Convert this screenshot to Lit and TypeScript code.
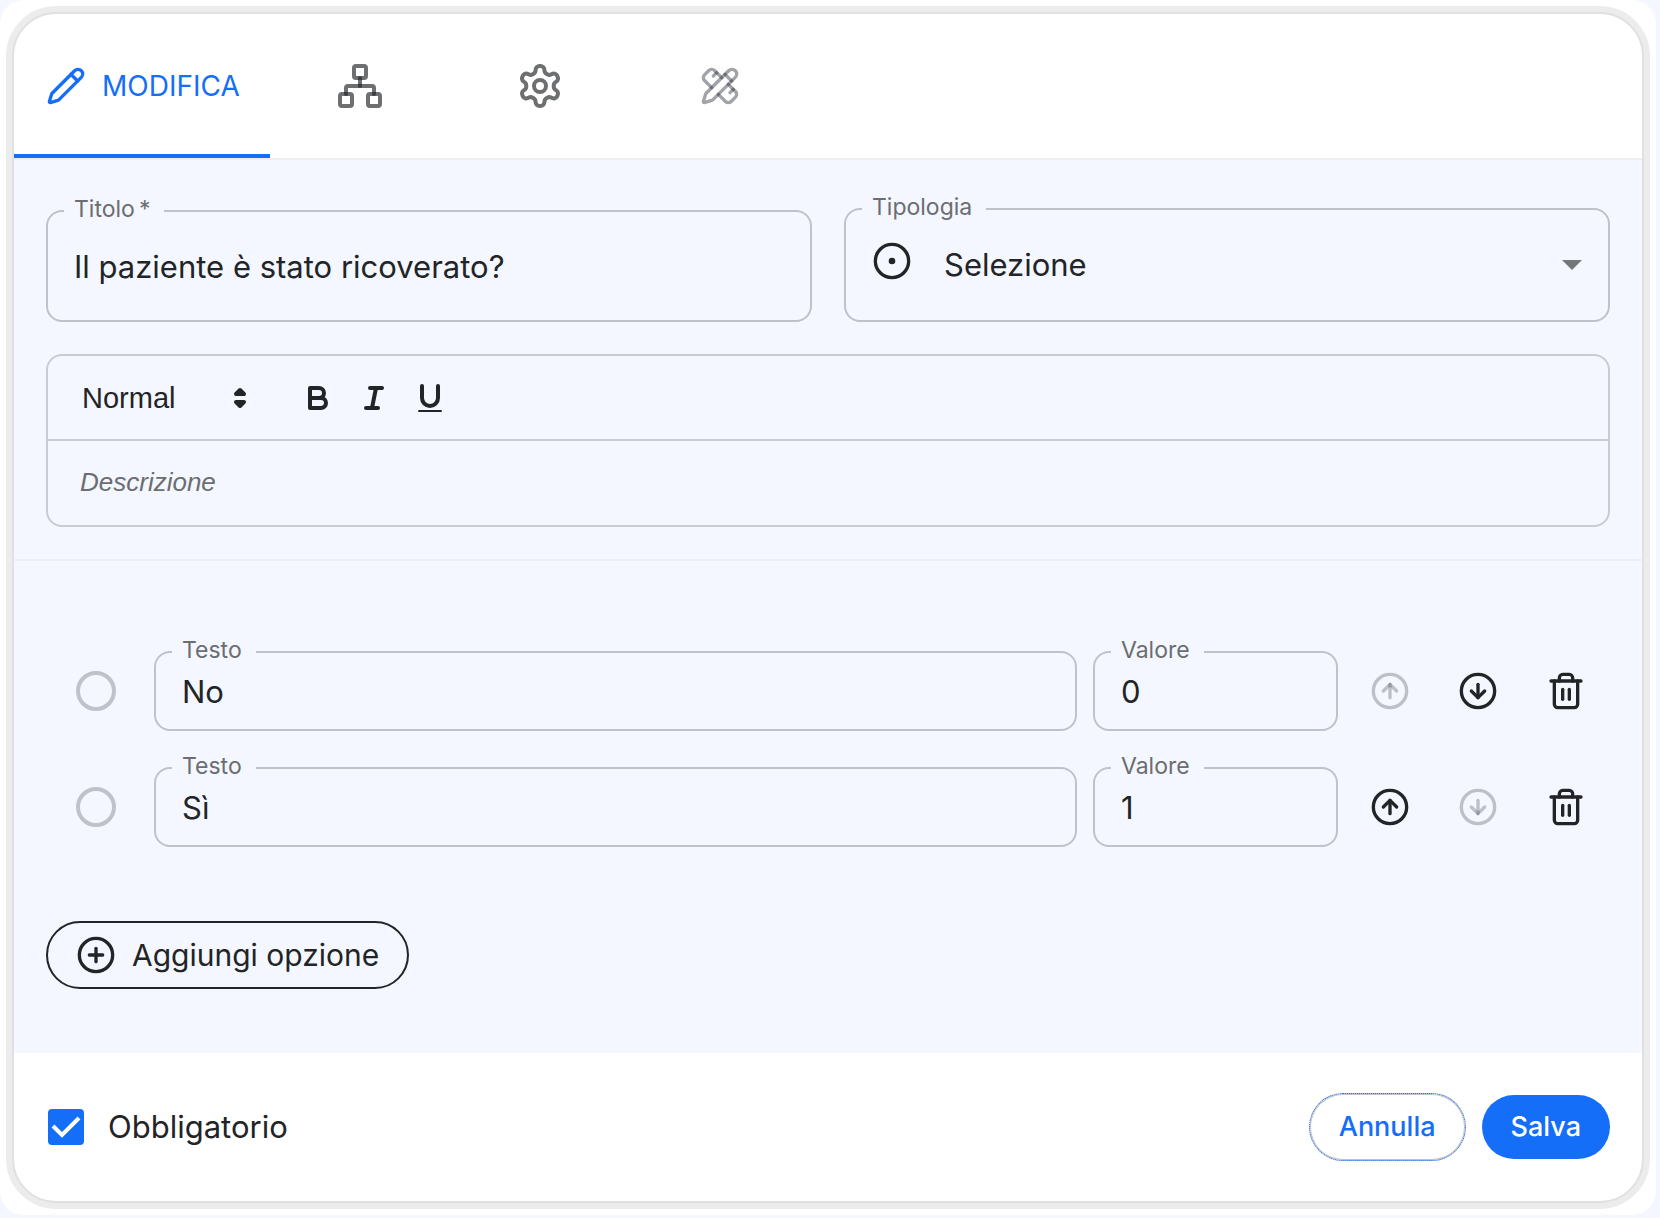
import { LitElement, html, svg, css } from "lit";
import { customElement, property, state } from "lit/decorators.js";

const PENCIL =
  "M21.174 6.812a1 1 0 0 0-3.986-3.987L3.842 16.174a2 2 0 0 0-.5.83l-1.321 4.352a.5.5 0 0 0 .623.622l4.353-1.32a2 2 0 0 0 .83-.497z";

const GEAR =
  "M12.22 2h-.44a2 2 0 0 0-2 2v.18a2 2 0 0 1-1 1.73l-.43.25a2 2 0 0 1-2 0l-.15-.08a2 2 0 0 0-2.73.73l-.22.38a2 2 0 0 0 .73 2.73l.15.1a2 2 0 0 1 1 1.72v.51a2 2 0 0 1-1 1.74l-.15.09a2 2 0 0 0-.73 2.73l.22.38a2 2 0 0 0 2.73.73l.15-.08a2 2 0 0 1 2 0l.43.25a2 2 0 0 1 1 1.73V20a2 2 0 0 0 2 2h.44a2 2 0 0 0 2-2v-.18a2 2 0 0 1 1-1.73l.43-.25a2 2 0 0 1 2 0l.15.08a2 2 0 0 0 2.73-.73l.22-.39a2 2 0 0 0-.73-2.73l-.15-.08a2 2 0 0 1-1-1.74v-.5a2 2 0 0 1 1-1.74l.15-.09a2 2 0 0 0 .73-2.73l-.22-.38a2 2 0 0 0-2.73-.73l-.15.08a2 2 0 0 1-2 0l-.43-.25a2 2 0 0 1-1-1.73V4a2 2 0 0 0-2-2z";

const ICONS = {
  pencil: svg`<path d=${PENCIL} /><path d="m15 5 4 4" />`,
  network: svg`<rect x="16" y="16" width="6" height="6" rx="1" /><rect x="2" y="16" width="6" height="6" rx="1" /><rect x="9" y="2" width="6" height="6" rx="1" /><path d="M5 16v-3a1 1 0 0 1 1-1h12a1 1 0 0 1 1 1v3" /><path d="M12 12V8" />`,
  settings: svg`<path d=${GEAR} /><circle cx="12" cy="12" r="3" />`,
  design: svg`<path d="M13 7 8.7 2.7a2.41 2.41 0 0 0-3.4 0L2.7 5.3a2.41 2.41 0 0 0 0 3.4L7 13" /><path d="m8 6 2-2" /><path d="m18 16 2-2" /><path d="m17 11 4.3 4.3c.94.94.94 2.46 0 3.4l-2.6 2.6c-.94.94-2.46.94-3.4 0L11 17" /><path d=${PENCIL} /><path d="m15 5 4 4" />`,
  dot: svg`<circle cx="12" cy="12" r="10" /><circle cx="12" cy="12" r="1" />`,
  plus: svg`<circle cx="12" cy="12" r="10" /><path d="M8 12h8" /><path d="M12 8v8" />`,
  up: svg`<circle cx="12" cy="12" r="10" /><path d="m16 12-4-4-4 4" /><path d="M12 16V8" />`,
  down: svg`<circle cx="12" cy="12" r="10" /><path d="M12 8v8" /><path d="m8 12 4 4 4-4" />`,
  trash: svg`<path d="M3 6h18" /><path d="M19 6v14c0 1-1 2-2 2H7c-1 0-2-1-2-2V6" /><path d="M8 6V4c0-1 1-2 2-2h4c1 0 2 1 2 2v2" /><path d="M10 11v6" /><path d="M14 11v6" />`,
};

type IconName = keyof typeof ICONS;

@customElement("line-icon")
export class LineIcon extends LitElement {
  static styles = css`
    :host {
      display: block;
      width: 40px;
      height: 40px;
      flex: none;
    }
    .glyph {
      display: block;
      width: 100%;
      height: 100%;
      fill: none;
      stroke: currentColor;
      stroke-width: 2;
      stroke-linecap: round;
      stroke-linejoin: round;
    }
  `;

  @property() name: IconName = "pencil";

  render() {
    return html`<svg class="glyph" viewBox="0 0 24 24" aria-hidden="true">${ICONS[this.name]}</svg>`;
  }
}

interface Option {
  text: string;
  value: string;
}

@customElement("app-root")
export class AppRoot extends LitElement {
  static styles = css`
    :host {
      --blue: #146ef8;
      --ink: #222426;
      --muted: #6b6d70;
      --line: #bfc2ca;
      --tint: #f4f7ff;
      display: block;
      box-sizing: border-box;
      min-height: 100vh;
      padding: 0 4px 2px 0;
      background: var(--tint);
      color: var(--ink);
      font-family: Inter, "Liberation Sans", sans-serif;
      font-size: 30px;
      line-height: 40px;
    }
    * {
      box-sizing: border-box;
    }
    button,
    input,
    select,
    textarea {
      margin: 0;
      padding: 0;
      border: 0;
      background: none;
      color: inherit;
      font: inherit;
      appearance: none;
      outline: none;
      border-radius: 0;
    }
    button {
      cursor: pointer;
    }
    .panel {
      padding: 12px;
      border-radius: 24px;
      background: #fff;
    }
    .card {
      overflow: hidden;
      border: 2px solid #dfe0e2;
      border-radius: 44px;
      box-shadow: 0 0 0 6px #ececec;
      background: #fff;
    }
    .tabs {
      display: flex;
      border-bottom: 2px solid #eeeeee;
    }
    .tab {
      display: flex;
      align-items: center;
      justify-content: center;
      width: 180px;
      height: 144px;
      border-bottom: 4px solid transparent;
      border-top: 4px solid transparent;
      color: rgba(34, 36, 38, 0.66);
      font-size: 28px;
    }
    .tab.active {
      width: auto;
      gap: 16px;
      padding: 0 30px 0 32px;
      border-bottom-color: var(--blue);
      color: var(--blue);
    }
    .tab.faded {
      color: rgba(34, 36, 48, 0.42);
    }
    .large {
      width: 48px;
      height: 48px;
    }
    .section {
      padding: 48px 32px 32px;
      background: var(--tint);
    }
    .section + .section {
      padding: 90px 32px 64px;
      border-top: 2px solid #eeeff0;
    }
    .pair {
      display: grid;
      grid-template-columns: 1fr 1fr;
      align-items: end;
      gap: 32px;
      margin-bottom: 32px;
    }
    .field {
      position: relative;
      display: flex;
      align-items: center;
      height: 80px;
      min-width: 0;
      padding: 0 26px;
      border: 2px solid var(--line);
      border-radius: 16px;
    }
    .field.tall {
      height: 112px;
    }
    .field.type {
      height: 114px;
    }
    .field .caption {
      position: absolute;
      top: -19px;
      left: 16px;
      display: flex;
      gap: 4px;
      padding: 0 14px 0 10px;
      background: var(--tint);
      color: var(--muted);
      font-size: 23px;
      line-height: 32px;
    }
    .field .entry {
      flex: 1;
      width: 100%;
      min-width: 0;
      height: 100%;
      font-size: 31px;
    }
    .field .choice {
      padding-left: 32px;
    }
    .choice-icon {
      margin-bottom: 8px;
    }
    .caret {
      width: 20px;
      height: 10px;
      fill: #757678;
    }
    .editor {
      border: 2px solid #c9cbce;
      border-radius: 16px;
    }
    .toolbar {
      display: flex;
      align-items: center;
      height: 85px;
      padding: 0 34px;
      border-bottom: 2px solid #c9cbce;
      font-family: "Liberation Sans", Arial, sans-serif;
      font-size: 29px;
    }
    .style-select {
      width: 140px;
      height: 48px;
    }
    .tools {
      display: flex;
      margin-left: 32px;
    }
    .tool {
      padding: 6px 10px;
    }
    .mark {
      display: block;
      width: 36px;
      height: 36px;
      fill: none;
      stroke: var(--ink);
      stroke-width: 2;
      stroke-linecap: round;
      stroke-linejoin: round;
    }
    .mark .solid {
      fill: var(--ink);
    }
    .mark .plain {
      fill: var(--ink);
      stroke: none;
    }
    .description {
      display: block;
      width: 100%;
      height: 84px;
      padding: 21px 32px;
      resize: none;
      overflow: hidden;
      font-family: "Liberation Sans", Arial, sans-serif;
      font-size: 26px;
    }
    .description::placeholder {
      color: var(--muted);
      font-style: italic;
      opacity: 1;
    }
    .options {
      display: grid;
      gap: 36px;
      margin: 0 0 74px;
      padding: 0;
      list-style: none;
    }
    .option {
      display: flex;
      align-items: center;
    }
    .radio {
      flex: none;
      width: 40px;
      height: 40px;
      margin: 0 38px 0 30px;
      border: 4px solid var(--line);
      border-radius: 50%;
    }
    .field.text {
      flex: 1;
      margin-right: 16px;
    }
    .field.value {
      width: 245px;
      margin-right: 8px;
    }
    .action {
      padding: 20px 24px;
    }
    .action:disabled {
      color: rgba(34, 36, 48, 0.26);
      cursor: default;
    }
    .add {
      display: flex;
      align-items: center;
      gap: 16px;
      height: 68px;
      padding: 0 28px;
      border: 2px solid var(--ink);
      border-radius: 34px;
    }
    .footer {
      display: flex;
      align-items: center;
      gap: 16px;
      padding: 40px 32px;
    }
    .required {
      display: flex;
      align-items: center;
      gap: 24px;
      margin-right: auto;
      padding-left: 2px;
      font-size: 31px;
    }
    .tick {
      display: grid;
    }
    .box {
      grid-area: 1 / 1;
      width: 36px;
      height: 36px;
      border: 4px solid var(--line);
      border-radius: 4px;
    }
    .box:checked {
      border-color: var(--blue);
      background: var(--blue);
    }
    .check {
      grid-area: 1 / 1;
      width: 36px;
      height: 36px;
      fill: none;
      stroke: #fff;
      stroke-width: 4;
      pointer-events: none;
    }
    .pill {
      height: 64px;
      padding: 0 29px;
      border-radius: 34px;
      background: var(--blue);
      color: #fff;
      font-size: 27px;
      font-weight: 500;
    }
    .pill.outline {
      height: 68px;
      border: 1px dotted var(--blue);
      background:
        linear-gradient(#fff, #fff) padding-box,
        linear-gradient(var(--line), var(--line)) border-box;
      box-shadow: inset 0 0 0 1px var(--line);
      color: var(--blue);
    }
  `;

  @state() private options: Option[] = [
    { text: "No", value: "0" },
    { text: "Sì", value: "1" },
  ];

  private move(index: number, step: number) {
    const next = [...this.options];
    const [item] = next.splice(index, 1);
    next.splice(index + step, 0, item);
    this.options = next;
  }

  private remove(index: number) {
    this.options = this.options.filter((_, i) => i !== index);
  }

  private add() {
    this.options = [...this.options, { text: "", value: String(this.options.length) }];
  }

  private renderOption(option: Option, i: number) {
    return html`
      <li class="option">
        <input class="radio" type="radio" name="default" aria-label=${option.text} />
        <div class="field text">
          <label class="caption" for="text-${i}">Testo</label>
          <input class="entry" id="text-${i}" .value=${option.text} />
        </div>
        <div class="field value">
          <label class="caption" for="value-${i}">Valore</label>
          <input class="entry" id="value-${i}" .value=${option.value} />
        </div>
        <button class="action" aria-label="Sposta su" ?disabled=${i === 0} @click=${() => this.move(i, -1)}>
          <line-icon name="up"></line-icon>
        </button>
        <button
          class="action"
          aria-label="Sposta giù"
          ?disabled=${i === this.options.length - 1}
          @click=${() => this.move(i, 1)}
        >
          <line-icon name="down"></line-icon>
        </button>
        <button class="action" aria-label="Elimina" @click=${() => this.remove(i)}>
          <line-icon name="trash"></line-icon>
        </button>
      </li>
    `;
  }

  render() {
    return html`
      <div class="panel">
        <main class="card">
          <nav class="tabs" role="tablist">
            <button class="tab active" role="tab" aria-selected="true">
              <line-icon name="pencil"></line-icon>MODIFICA
            </button>
            <button class="tab" role="tab" aria-label="Struttura">
              <line-icon class="large" name="network"></line-icon>
            </button>
            <button class="tab" role="tab" aria-label="Impostazioni">
              <line-icon class="large" name="settings"></line-icon>
            </button>
            <button class="tab faded" role="tab" aria-label="Aspetto">
              <line-icon name="design"></line-icon>
            </button>
          </nav>

          <section class="section">
            <div class="pair">
              <div class="field tall">
                <label class="caption" for="title">Titolo<span>*</span></label>
                <input class="entry" id="title" value="Il paziente è stato ricoverato?" />
              </div>
              <div class="field type">
                <label class="caption" for="type">Tipologia</label>
                <line-icon class="choice-icon" name="dot"></line-icon>
                <select class="entry choice" id="type">
                  <option>Selezione</option>
                </select>
                <svg class="caret" viewBox="0 0 20 10" aria-hidden="true"><path d="M0 0h20L10 10z" /></svg>
              </div>
            </div>

            <div class="editor">
              <div class="toolbar">
                <select class="style-select" aria-label="Stile">
                  <option>Normal</option>
                </select>
                <svg class="mark" viewBox="0 0 18 18" aria-hidden="true">
                  <polygon class="solid" points="7 11 9 13 11 11 7 11" />
                  <polygon class="solid" points="7 7 9 5 11 7 7 7" />
                </svg>
                <div class="tools">
                  <button class="tool" aria-label="Grassetto">
                    <svg class="mark" viewBox="0 0 18 18">
                      <path d="M5,4H9.5A2.5,2.5,0,0,1,12,6.5v0A2.5,2.5,0,0,1,9.5,9H5A0,0,0,0,1,5,9V4A0,0,0,0,1,5,4Z" />
                      <path d="M5,9h5.5A2.5,2.5,0,0,1,13,11.5v0A2.5,2.5,0,0,1,10.5,14H5a0,0,0,0,1,0,0V9A0,0,0,0,1,5,9Z" />
                    </svg>
                  </button>
                  <button class="tool" aria-label="Corsivo">
                    <svg class="mark" viewBox="0 0 18 18">
                      <line x1="7" x2="13" y1="4" y2="4" />
                      <line x1="5" x2="11" y1="14" y2="14" />
                      <line x1="8" x2="10" y1="14" y2="4" />
                    </svg>
                  </button>
                  <button class="tool" aria-label="Sottolineato">
                    <svg class="mark" viewBox="0 0 18 18">
                      <path d="M5,3V9a4.012,4.012,0,0,0,4,4H9a4.012,4.012,0,0,0,4-4V3" />
                      <rect class="plain" x="3" y="15" width="12" height="1" rx="0.5" />
                    </svg>
                  </button>
                </div>
              </div>
              <textarea class="description" rows="1" placeholder="Descrizione" aria-label="Descrizione"></textarea>
            </div>
          </section>

          <section class="section">
            <ul class="options">
              ${this.options.map((option, i) => this.renderOption(option, i))}
            </ul>
            <button class="add" @click=${this.add}><line-icon name="plus"></line-icon>Aggiungi opzione</button>
          </section>

          <footer class="footer">
            <label class="required">
              <span class="tick">
                <input class="box" type="checkbox" checked />
                <svg class="check" viewBox="0 0 36 36" aria-hidden="true"><path d="M5 17l9 9L31 9" /></svg>
              </span>
              Obbligatorio
            </label>
            <button class="pill outline">Annulla</button>
            <button class="pill">Salva</button>
          </footer>
        </main>
      </div>
    `;
  }
}
